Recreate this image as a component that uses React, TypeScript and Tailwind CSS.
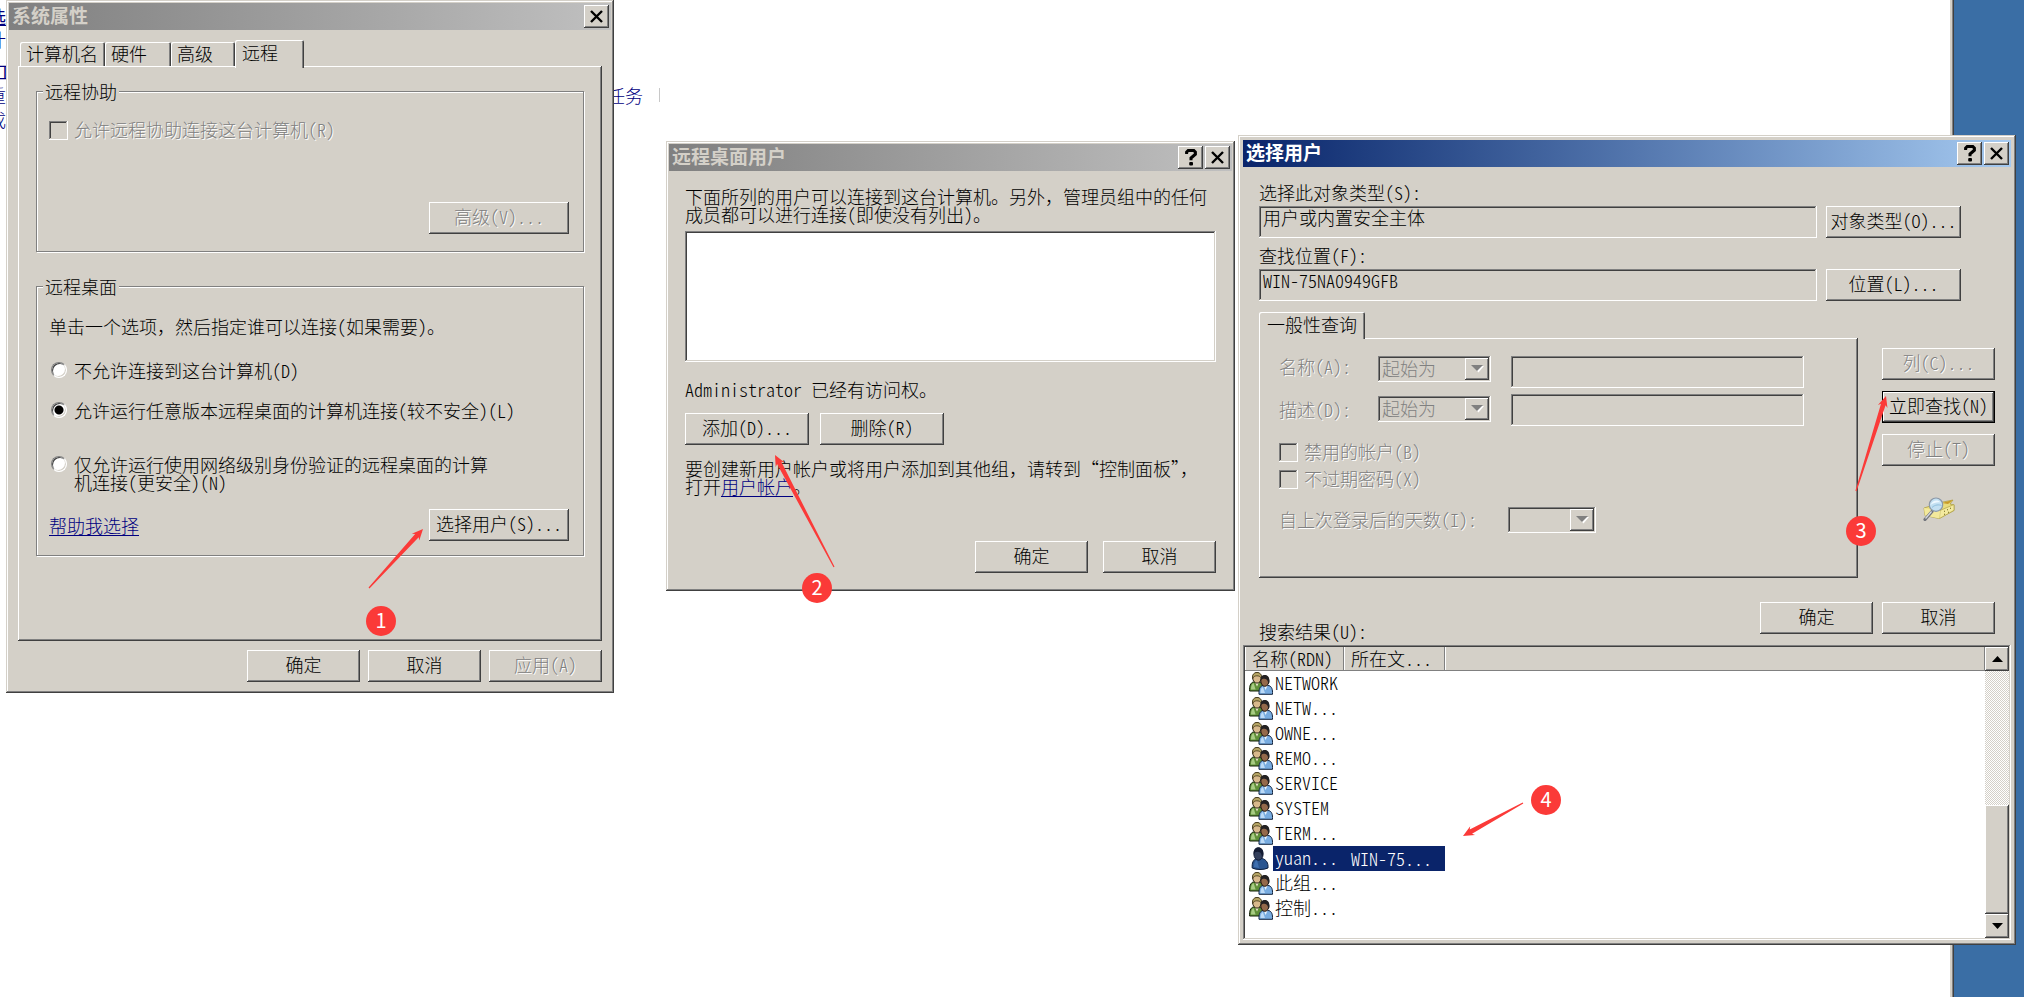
import type { ReactNode } from "react";

const RAISED =
  "shadow-[inset_-1px_-1px_0_#404040,inset_1px_1px_0_#ffffff,inset_-2px_-2px_0_#808080]";
const SUNKEN =
  "shadow-[inset_-1px_-1px_0_#ffffff,inset_1px_1px_0_#808080,inset_-2px_-2px_0_#d4d0c8,inset_2px_2px_0_#404040]";
const FRAME =
  "shadow-[inset_-1px_-1px_0_#404040,inset_1px_1px_0_#d4d0c8,inset_-2px_-2px_0_#808080,inset_2px_2px_0_#ffffff]";
const DIMMED = "text-[#808080] [text-shadow:1px_1px_0_#ffffff]";

/* ASCII runs use the face's half-width forms so that two of them span one full-width character. */
function T({ children }: { children: string }) {
  return (
    <>
      {children.split(/([\x20-\x7e]+)/).map((run, i) =>
        i % 2 === 1 ? (
          <span key={i} className="whitespace-pre [font-feature-settings:'hwid']">
            {run}
          </span>
        ) : (
          run
        ),
      )}
    </>
  );
}

function Button({
  children,
  className = "w-[113px]",
  disabled = false,
  isDefault = false,
}: {
  children: string;
  className?: string;
  disabled?: boolean;
  isDefault?: boolean;
}) {
  const bevel = isDefault
    ? "shadow-[inset_0_0_0_1px_#000000,inset_-2px_-2px_0_#404040,inset_2px_2px_0_#ffffff,inset_-3px_-3px_0_#808080]"
    : RAISED;
  return (
    <button
      type="button"
      disabled={disabled}
      className={`flex h-8 shrink-0 items-center justify-center whitespace-nowrap bg-[#d4d0c8] pb-[5px] leading-[18px] ${bevel} ${disabled ? DIMMED : ""} ${className}`}
    >
      <span>
        <T>{children}</T>
      </span>
    </button>
  );
}

function CloseGlyph() {
  return (
    <svg viewBox="0 0 13 13" className="size-[13px]" aria-hidden="true">
      <path d="M1 1 12 12M12 1 1 12" stroke="#000" strokeWidth="2.4" fill="none" />
    </svg>
  );
}

function HelpGlyph() {
  return (
    <svg viewBox="0 0 12 17" className="h-[17px] w-3" aria-hidden="true">
      <path d="M1.6 5V3.2L3.2 1.5H8.8L10.4 3.2V5.2L6 9V11.2" stroke="#000" strokeWidth="3" fill="none" />
      <rect x="4.2" y="13" width="3.8" height="3.6" rx="1" />
    </svg>
  );
}

function Dialog({
  title,
  active = false,
  help = false,
  className,
  children,
}: {
  title: string;
  active?: boolean;
  help?: boolean;
  className: string;
  children: ReactNode;
}) {
  const bar = active
    ? "bg-linear-to-r from-[#0a246a] to-[#a6caf0] text-white"
    : "bg-linear-to-r from-[#808080] to-[#c0c0c0] text-[#d4d0c8]";
  const box = `flex h-[23px] w-[25px] items-center justify-center bg-[#d4d0c8] ${RAISED}`;
  return (
    <section aria-label={title} className={`absolute bg-[#d4d0c8] ${FRAME} ${className}`}>
      <header className={`flex h-[27px] items-center gap-[2px] pr-[2px] pl-[3px] ${bar}`}>
        <h2 className="flex-1 pb-1 text-[19px] leading-[22px] font-bold">{title}</h2>
        {help && (
          <button type="button" aria-label="帮助" className={box}>
            <HelpGlyph />
          </button>
        )}
        <button type="button" aria-label="关闭" className={box}>
          <CloseGlyph />
        </button>
      </header>
      {children}
    </section>
  );
}

function Group({ title, className, children }: { title: string; className: string; children: ReactNode }) {
  return (
    <fieldset
      className={`border border-[#808080] shadow-[1px_1px_0_#ffffff,inset_1px_1px_0_#ffffff] ${className}`}
    >
      <legend className="-ml-[6px] h-5 bg-[#d4d0c8] px-[2px] leading-5">{title}</legend>
      {children}
    </fieldset>
  );
}

function Check({ id, label }: { id: string; label: string }) {
  return (
    <div className="flex items-center gap-[6px]">
      <input id={id} type="checkbox" disabled className={`size-[19px] shrink-0 appearance-none ${SUNKEN}`} />
      <label htmlFor={id} className={`pb-[2px] leading-[17px] ${DIMMED}`}>
        <T>{label}</T>
      </label>
    </div>
  );
}

function Radio({ id, checked = false, children }: { id: string; checked?: boolean; children: ReactNode }) {
  return (
    <div className="flex items-start gap-[7px] pl-[2px]">
      <input
        id={id}
        type="radio"
        name="remote"
        defaultChecked={checked}
        className="mt-px size-4 shrink-0 appearance-none rounded-full border border-t-[#808080] border-r-white border-b-white border-l-[#808080] bg-white shadow-[inset_1px_1px_0_#404040,inset_-1px_-1px_0_#d4d0c8] checked:bg-[radial-gradient(circle,#000_4px,#fff_5px)]"
      />
      <label htmlFor={id} className="leading-[18px]">
        {children}
      </label>
    </div>
  );
}

function Select({ id, value, className }: { id: string; value: string; className: string }) {
  return (
    <div className={`relative h-[26px] ${className}`}>
      <select
        id={id}
        disabled
        className={`size-full appearance-none pb-[2px] pl-1 leading-5 text-[#808080] opacity-100 ${SUNKEN}`}
      >
        <option>{value}</option>
      </select>
      <span
        className={`pointer-events-none absolute top-[2px] right-[2px] flex h-[22px] w-6 items-center justify-center bg-[#d4d0c8] ${RAISED}`}
      >
        <svg viewBox="0 0 13 8" className="h-2 w-[13px]" aria-hidden="true">
          <path d="M2 1H13L7.500 7.500Z" fill="#fff" />
          <path d="M0 0H12L6 6Z" fill="#808080" />
        </svg>
      </span>
    </div>
  );
}

function GroupIcon() {
  return (
    <svg viewBox="0 0 24 23" className="h-[23px] w-6 shrink-0" aria-hidden="true">
      <path d="M.6 19c-.3-5 .8-8 3.600-9h7c2.500 1 3.500 4 3.500 9Z" fill="#5f8f38" stroke="#14200a" />
      <path d="M2 17.500c0-3.500.8-5.500 2.600-6.500l2 6.500Z" fill="#a8cc84" />
      <path d="M6 10 8 14.500l2-4.500Z" fill="#efe9d0" />
      <ellipse cx="8" cy="5.800" rx="4.300" ry="5.300" fill="#d8b98c" stroke="#2c2414" />
      <path d="M3.600 6.500C3 2.500 5 .5 8 .5s5.200 2 4.500 6C11.500 4.600 10 3.800 7.800 3.800 5.500 3.900 4.400 4.800 3.600 6.500Z" fill="#b8a766" stroke="#3a3014" strokeWidth=".8" />
      <path d="M10 22.300c-.3-5 .8-7.700 3.400-8.700h6.600c2.700 1 3.800 3.700 3.500 8.700Z" fill="#78ace0" stroke="#12233e" />
      <path d="M11.500 21c0-3.200.7-5 2.300-6l2.200 6Z" fill="#bcdaf6" />
      <path d="M14.800 13.500 16.600 18l2-4.500Z" fill="#eef4fb" />
      <ellipse cx="15.800" cy="9" rx="4" ry="5.300" fill="#94694a" stroke="#1c120a" />
      <path d="M11.700 8.500C11.400 4.800 13 3 15.800 3s5.200 2.200 4.600 7.600l-1.200 1.600C19 8.600 18 7 15.600 6.800 13.300 6.800 12.400 7.300 11.700 8.500Z" fill="#232122" />
    </svg>
  );
}

function UserIcon() {
  return (
    <svg viewBox="0 0 24 23" className="h-[23px] w-6 shrink-0" aria-hidden="true">
      <path d="M3.200 21c-.4-5 1-8.500 4.500-9.500h5.500c4 1 6.300 4.500 5.800 9.500-4 2-12 2-15.800 0Z" fill="#2a5590" stroke="#0b1c3c" />
      <path d="M5 20c0-4 .8-6 3-7l2 8Z" fill="#3f70b0" />
      <ellipse cx="9.500" cy="7" rx="4.600" ry="6.200" fill="#34405c" stroke="#101a33" />
      <path d="M4.800 7C4.200 2.500 6.500.6 9.500.6s5.500 2.400 4.500 7.500l-1 2.400C12.700 6.500 11.500 5 8.800 4.800 6.500 4.900 5.500 5.600 4.800 7Z" fill="#141c33" />
    </svg>
  );
}

function SearchFolderIcon() {
  return (
    <svg viewBox="0 0 32 24" className="h-6 w-8" aria-hidden="true">
      <path d="M1 11 20 5l10-2-3 4 4 1v5.500L16 21.500 2 18.500Z" fill="#e9dc7c" stroke="#a8983a" strokeWidth=".7" />
      <path d="M17 13.500 31 7.500v5.800L16.500 21.500Z" fill="#f3ea9f" stroke="#a8983a" strokeWidth=".6" />
      <path d="M1 11 17 13.500 16.500 21.500 2 18.500Z" fill="#f3e99c" />
      <path d="M19 6 30 3l-5 4Z" fill="#c89a28" />
      <path d="M21 14.500l1-.5M24 13l1-.5M27 11.500l1-.5M21 17.500l1-.5M25 15.500l1-.5" stroke="#6f6420" strokeWidth="1" />
      <path d="M9 14.500 2 22.500" stroke="#73767d" strokeWidth="3.200" strokeLinecap="round" />
      <path d="M8.500 14.500 2.500 21.500" stroke="#d7dae0" strokeWidth="1.200" />
      <circle cx="13" cy="7.700" r="6.700" fill="#c3e0f2" stroke="#8b98a8" strokeWidth="1.200" />
      <path d="M7.500 8C9 3.500 14 1.600 18 5.500 14 5 10.500 6 7.500 8Z" fill="#eef8ff" />
      <path d="M9 10.500c3-3 7-3 9.500-2" stroke="#8fbfdc" fill="none" />
    </svg>
  );
}

/* Tapered arrow: thin at the tail, widening up to a small barbed head at the tip. */
function Arrow({ from, to }: { from: [number, number]; to: [number, number] }) {
  const dx = to[0] - from[0];
  const dy = to[1] - from[1];
  const len = Math.hypot(dx, dy);
  const at = (along: number, side: number) =>
    `${to[0] - (dx / len) * along - (dy / len) * side},${to[1] - (dy / len) * along + (dx / len) * side}`;
  const points = [at(0, 0), at(11, 5), at(9, 2.4), at(len, 0.6), at(len, -0.6), at(9, -2.4), at(11, -5)];
  return <polygon points={points.join(" ")} fill="#fb3a38" />;
}

function Badge({ n, className }: { n: number; className: string }) {
  return (
    <span
      className={`absolute flex size-[30px] items-center justify-center rounded-full bg-[#fb3a38] pb-[2px] text-[20px] leading-none font-normal text-white ${className}`}
    >
      {n}
    </span>
  );
}

const TAB =
  "rounded-t-[2px] bg-[#d4d0c8] text-left shadow-[inset_1px_1px_0_#ffffff,inset_-1px_0_0_#404040,inset_-2px_0_0_#808080]";

function SystemProperties() {
  return (
    <Dialog title="系统属性" className="top-0 left-[6px] w-[608px] p-[3px]">
      <div className="px-[9px] pt-[10px] pb-2">
        <div role="tablist" className="flex h-[26px] items-end pl-[2px]">
          <button type="button" role="tab" className={`h-6 w-[85px] pb-[2px] pl-[6px] leading-5 ${TAB}`}>
            计算机名
          </button>
          <button type="button" role="tab" className={`h-6 w-[66px] pb-[2px] pl-[6px] leading-5 ${TAB}`}>
            硬件
          </button>
          <button type="button" role="tab" className={`h-6 w-16 pb-[2px] pl-[6px] leading-5 ${TAB}`}>
            高级
          </button>
          <button
            type="button"
            role="tab"
            aria-selected="true"
            className={`relative -mb-[2px] h-7 w-[69px] pb-1 pl-[7px] leading-5 ${TAB}`}
          >
            远程
          </button>
        </div>
        <div className={`px-[18px] pt-[15px] pb-[85px] ${RAISED}`}>
          <Group title="远程协助" className="pr-[14px] pb-[17px] pl-3">
            <div className="pt-5">
              <Check id="assist" label="允许远程协助连接这台计算机(R)" />
            </div>
            <div className="mt-[62px] flex justify-end">
              <Button disabled className="w-[140px]">
                高级(V)...
              </Button>
            </div>
          </Group>
          <Group title="远程桌面" className="mt-6 pr-[14px] pb-[14px] pl-3">
            <p className="pt-[21px] leading-[18px]">
              <T>单击一个选项，然后指定谁可以连接(如果需要)。</T>
            </p>
            <div className="mt-[26px]">
              <Radio id="deny">
                <T>不允许连接到这台计算机(D)</T>
              </Radio>
            </div>
            <div className="mt-[22px]">
              <Radio id="any" checked>
                <T>允许运行任意版本远程桌面的计算机连接(较不安全)(L)</T>
              </Radio>
            </div>
            <div className="mt-9">
              <Radio id="nla">
                仅允许运行使用网络级别身份验证的远程桌面的计算
                <br />
                <T>机连接(更安全)(N)</T>
              </Radio>
            </div>
            <div className="mt-[18px] flex items-center justify-between">
              <a href="#help" className="text-[#000080] underline underline-offset-2">
                帮助我选择
              </a>
              <Button className="w-[140px]">选择用户(S)...</Button>
            </div>
          </Group>
        </div>
        <div className="mt-[9px] flex justify-end gap-2">
          <Button>确定</Button>
          <Button>取消</Button>
          <Button disabled>应用(A)</Button>
        </div>
      </div>
    </Dialog>
  );
}

function RemoteUsers() {
  return (
    <Dialog title="远程桌面用户" help className="top-[141px] left-[666px] w-[569px] p-[3px]">
      <div className="px-4 pt-4 pb-[15px] leading-[18px]">
        <p className="whitespace-nowrap">
          下面所列的用户可以连接到这台计算机。另外，管理员组中的任何
          <br />
          <T>成员都可以进行连接(即使没有列出)。</T>
        </p>
        <ul aria-label="用户" className={`mt-2 h-[131px] bg-white ${SUNKEN}`} />
        <p className="mt-[18px]">
          <T>Administrator 已经有访问权。</T>
        </p>
        <div className="mt-[15px] flex gap-[11px]">
          <Button className="w-[124px]">添加(D)...</Button>
          <Button className="w-[124px]">删除(R)</Button>
        </div>
        <p className="mt-[14px] whitespace-nowrap">
          要创建新用户帐户或将用户添加到其他组，请转到“控制面板”，
          <br />
          打开
          <a href="#accounts" className="text-[#000080] underline underline-offset-2">
            用户帐户
          </a>
          。
        </p>
        <div className="mt-[46px] flex justify-end gap-[15px]">
          <Button>确定</Button>
          <Button>取消</Button>
        </div>
      </div>
    </Dialog>
  );
}

const RESULTS: { name: string; folder?: string }[] = [
  { name: "NETWORK" },
  { name: "NETW..." },
  { name: "OWNE..." },
  { name: "REMO..." },
  { name: "SERVICE" },
  { name: "SYSTEM" },
  { name: "TERM..." },
  { name: "yuan...", folder: "WIN-75..." },
  { name: "此组..." },
  { name: "控制..." },
];

const TH =
  "h-6 bg-[#d4d0c8] p-0 pb-[2px] text-left font-light shadow-[inset_-1px_-1px_0_#808080,inset_1px_0_0_#ffffff]";

function SelectUsers() {
  const field = `h-8 pr-1 pb-[10px] pl-1 ${SUNKEN}`;
  return (
    <Dialog title="选择用户" active help className="top-[135px] left-[1238px] w-[778px] p-[5px]">
      <div className="px-4 pt-4 leading-[18px]">
        <label htmlFor="type" className="block">
          <T>选择此对象类型(S):</T>
        </label>
        <div className="mt-[5px] flex gap-[9px]">
          <input id="type" readOnly defaultValue="用户或内置安全主体" className={`w-[558px] ${field}`} />
          <Button className="w-[135px]">对象类型(O)...</Button>
        </div>
        <label htmlFor="place" className="mt-2 block">
          <T>查找位置(F):</T>
        </label>
        <div className="mt-[5px] flex gap-[9px]">
          <input
            id="place"
            readOnly
            defaultValue="WIN-75NA0949GFB"
            className={`w-[558px] [font-feature-settings:'hwid'] ${field}`}
          />
          <Button className="w-[135px]">位置(L)...</Button>
        </div>
        <div className="mt-[11px] flex gap-6">
          <div className="flex-1">
            <button
              type="button"
              role="tab"
              aria-selected="true"
              className={`relative -mb-px block h-[27px] w-[106px] pb-1 pl-2 ${TAB}`}
            >
              一般性查询
            </button>
            <div className={`px-5 pt-[18px] pb-[45px] ${RAISED}`}>
              <div className="flex">
                <div className={`flex w-[99px] flex-col gap-[25px] pt-px ${DIMMED}`}>
                  <label htmlFor="name-op">
                    <T>名称(A):</T>
                  </label>
                  <label htmlFor="desc-op">
                    <T>描述(D):</T>
                  </label>
                </div>
                <div className="flex flex-col gap-[14px]">
                  <Select id="name-op" value="起始为" className="w-[113px]" />
                  <Select id="desc-op" value="起始为" className="w-[113px]" />
                </div>
                <div className="ml-5 flex flex-col gap-[6px]">
                  <input aria-label="名称" disabled className={`w-[293px] ${field}`} />
                  <input aria-label="描述" disabled className={`w-[293px] ${field}`} />
                </div>
              </div>
              <div className="mt-[17px] flex flex-col gap-2">
                <Check id="off" label="禁用的帐户(B)" />
                <Check id="keep" label="不过期密码(X)" />
              </div>
              <div className="mt-[18px] flex items-center">
                <label htmlFor="days" className={`w-[229px] pb-[2px] ${DIMMED}`}>
                  <T>自上次登录后的天数(I):</T>
                </label>
                <Select id="days" value="" className="w-[88px]" />
              </div>
            </div>
          </div>
          <div className="flex flex-col items-center gap-[11px] pt-9">
            <Button disabled>列(C)...</Button>
            <Button isDefault>立即查找(N)</Button>
            <Button disabled>停止(T)</Button>
            <div className="mt-5">
              <SearchFolderIcon />
            </div>
          </div>
        </div>
        <div className="mt-6 flex items-end justify-between">
          <h3 className="pb-px">
            <T>搜索结果(U):</T>
          </h3>
          <div className="flex gap-[9px] pb-[7px]">
            <Button>确定</Button>
            <Button>取消</Button>
          </div>
        </div>
      </div>
      <div className={`mt-1 flex h-[295px] bg-white p-[2px] ${SUNKEN}`}>
        <div className="flex-1">
          <table className="w-full table-fixed border-collapse leading-[22px]">
            <thead>
              <tr>
                <th scope="col" className={`w-[99px] ${TH}`}>
                  <div className="pl-[7px]">
                    <T>名称(RDN)</T>
                  </div>
                </th>
                <th scope="col" className={`w-[101px] ${TH}`}>
                  <div className="pl-[7px]">
                    <T>所在文...</T>
                  </div>
                </th>
                <td className={TH} />
              </tr>
            </thead>
            <tbody>
              {RESULTS.map((r) => {
                const mark = r.folder ? "bg-[#0a246a] text-white" : "";
                return (
                  <tr key={r.name} className="h-[25px]">
                    <td className="p-0">
                      <div className="flex h-[25px] items-center pl-1">
                        {r.folder ? <UserIcon /> : <GroupIcon />}
                        <span className={`h-[25px] flex-1 pl-[2px] leading-[23px] ${mark}`}>
                          <T>{r.name}</T>
                        </span>
                      </div>
                    </td>
                    <td className={`p-0 pb-[2px] pl-[7px] ${mark}`}>{r.folder && <T>{r.folder}</T>}</td>
                    <td className="p-0" />
                  </tr>
                );
              })}
            </tbody>
          </table>
        </div>
        <div className="flex w-6 flex-col bg-[repeating-conic-gradient(#ffffff_0_25%,#d4d0c8_0_50%)] bg-[length:2px_2px]">
          <button type="button" aria-label="向上" className={`flex h-6 items-center justify-center bg-[#d4d0c8] ${RAISED}`}>
            <svg viewBox="0 0 11 6" className="h-[6px] w-[11px]" aria-hidden="true">
              <path d="M0 6 5.500 0 11 6Z" />
            </svg>
          </button>
          <div className="flex-1" />
          <div className={`h-[109px] bg-[#d4d0c8] ${RAISED}`} />
          <button type="button" aria-label="向下" className={`flex h-6 items-center justify-center bg-[#d4d0c8] ${RAISED}`}>
            <svg viewBox="0 0 11 6" className="h-[6px] w-[11px]" aria-hidden="true">
              <path d="M0 0H11L5.500 6Z" />
            </svg>
          </button>
        </div>
      </div>
    </Dialog>
  );
}

export default function App() {
  return (
    <main className="relative flex min-h-screen w-full overflow-hidden bg-[#3a6ea5] font-['Noto_Sans_CJK_SC',sans-serif] text-[18px] leading-[18px] font-light text-black">
      <div className="relative flex-1 overflow-hidden bg-white text-[#000080]">
        <div className="-ml-3 flex flex-col whitespace-nowrap pt-[7px]">
          <b className="underline">选</b>
          <span className="pt-[5px]">计</span>
          <b className="pt-[14px] pl-2">工</b>
          <span className="pt-[6px]">重</span>
          <span className="pt-[6px]">成</span>
        </div>
        <div className="absolute top-[86px] left-[607px] flex items-center gap-4">
          <span>任务</span>
          <span className="h-[14px] w-px bg-[#c8c8c8]" />
        </div>
      </div>
      <div className="mr-[70px] w-1 bg-[#d4d0c8] shadow-[inset_-1px_0_0_#404040,inset_-2px_0_0_#808080]" />

      <SystemProperties />
      <RemoteUsers />
      <SelectUsers />

      <svg className="pointer-events-none absolute inset-0 size-full" aria-hidden="true">
        <Arrow from={[369, 588]} to={[423, 529]} />
        <Arrow from={[834, 567]} to={[775, 455]} />
        <Arrow from={[1856, 491]} to={[1886, 396]} />
        <Arrow from={[1523, 803]} to={[1463, 836]} />
      </svg>
      <Badge n={1} className="top-[606px] left-[366px]" />
      <Badge n={2} className="top-[573px] left-[802px]" />
      <Badge n={3} className="top-[516px] left-[1846px]" />
      <Badge n={4} className="top-[785px] left-[1531px]" />
    </main>
  );
}
